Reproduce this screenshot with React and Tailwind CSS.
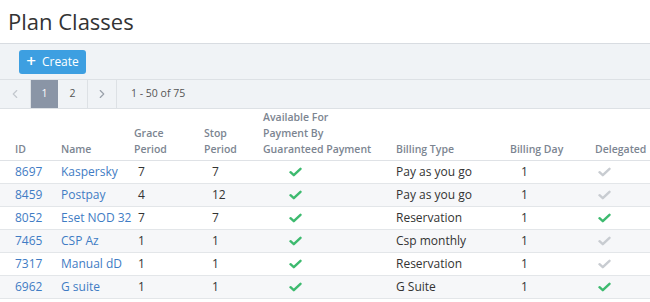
import { ChevronLeft, ChevronRight } from 'lucide-react';

const rows = [
  { id: '8697', name: 'Kaspersky', grace: '7', stop: '7', type: 'Pay as you go', day: '1', delegated: false },
  { id: '8459', name: 'Postpay', grace: '4', stop: '12', type: 'Pay as you go', day: '1', delegated: false },
  { id: '8052', name: 'Eset NOD 32', grace: '7', stop: '7', type: 'Reservation', day: '1', delegated: true },
  { id: '7465', name: 'CSP Az', grace: '1', stop: '1', type: 'Csp monthly', day: '1', delegated: false },
  { id: '7317', name: 'Manual dD', grace: '1', stop: '1', type: 'Reservation', day: '1', delegated: false },
  { id: '6962', name: 'G suite', grace: '1', stop: '1', type: 'G Suite', day: '1', delegated: true },
];

const cols = 'grid grid-cols-[61px_73px_70px_59px_133px_114px_85px_1fr]';

function Check({ on }) {
  return (
    <svg width="13" height="10" viewBox="0 0 13 10" fill="none">
      <path
        d="M1.5 5.2 L4.8 8.2 L11.5 1.8"
        stroke={on ? '#3dba6f' : '#c8ccd1'}
        strokeWidth="2.4"
        strokeLinecap="round"
        strokeLinejoin="round"
      />
    </svg>
  );
}

export default function App() {
  return (
    <div className="w-[650px] h-[302px] overflow-hidden bg-white text-[#333] font-['Open_Sans',sans-serif]">
      {/* Title */}
      <h1 className="h-[43px] pl-[8px] pt-[6px] text-[22px] leading-[30px] text-[#333]">Plan Classes</h1>

      {/* Toolbar */}
      <div className="bg-[#f0f3f6] border-t border-[#d8dce1]">
        <div className="h-[36px] flex items-center pl-[19px] border-b border-[#dde1e5]">
          <button className="h-[24px] w-[67px] rounded-[3px] bg-[#3d9fe1] text-white text-[12px] flex items-center justify-center gap-[6px]">
            <span className="text-[17px] leading-none font-semibold -mt-[2px]">+</span>
            <span>Create</span>
          </button>
        </div>
        <div className="h-[29px] flex items-stretch border-b border-[#dde1e5] text-[10.5px]">
          <div className="w-[31px] flex items-center justify-center border-r border-[#dde1e5] text-[#c3c8ce]">
            <ChevronLeft size={14} strokeWidth={2} />
          </div>
          <div className="w-[27px] flex items-center justify-center bg-[#8a95a6] text-white">1</div>
          <div className="w-[30px] flex items-center justify-center border-r border-[#dde1e5] text-[#555]">2</div>
          <div className="w-[29px] flex items-center justify-center border-r border-[#dde1e5] text-[#9aa1aa]">
            <ChevronRight size={14} strokeWidth={2} />
          </div>
          <div className="flex items-center pl-[14px] text-[#555]">1 - 50 of 75</div>
        </div>
      </div>

      {/* Table header */}
      <div className={`${cols} h-[52px] items-end pb-[3px] border-b border-[#dfe2e6] text-[10.5px] font-semibold leading-[16px] text-[#7c8591]`}>
        <div className="pl-[15px]">ID</div>
        <div>Name</div>
        <div>Grace<br />Period</div>
        <div>Stop<br />Period</div>
        <div>Available For<br />Payment By<br />Guaranteed Payment</div>
        <div>Billing Type</div>
        <div>Billing Day</div>
        <div>Delegated</div>
      </div>

      {/* Rows */}
      {rows.map((r, i) => (
        <div
          key={r.id}
          className={`${cols} h-[23px] items-center border-b border-[#e3e6e9] text-[12px] ${i % 2 === 1 ? 'bg-[#f6f7f9]' : 'bg-white'}`}
        >
          <div className="pl-[15px] text-[#3f7cc4]">{r.id}</div>
          <div className="text-[#3f7cc4] whitespace-nowrap">{r.name}</div>
          <div className="pl-[4px]">{r.grace}</div>
          <div className="pl-[8px]">{r.stop}</div>
          <div className="pl-[26px] flex"><Check on /></div>
          <div>{r.type}</div>
          <div className="pl-[11px]">{r.day}</div>
          <div className="pl-[3px] flex"><Check on={r.delegated} /></div>
        </div>
      ))}
    </div>
  );
}
